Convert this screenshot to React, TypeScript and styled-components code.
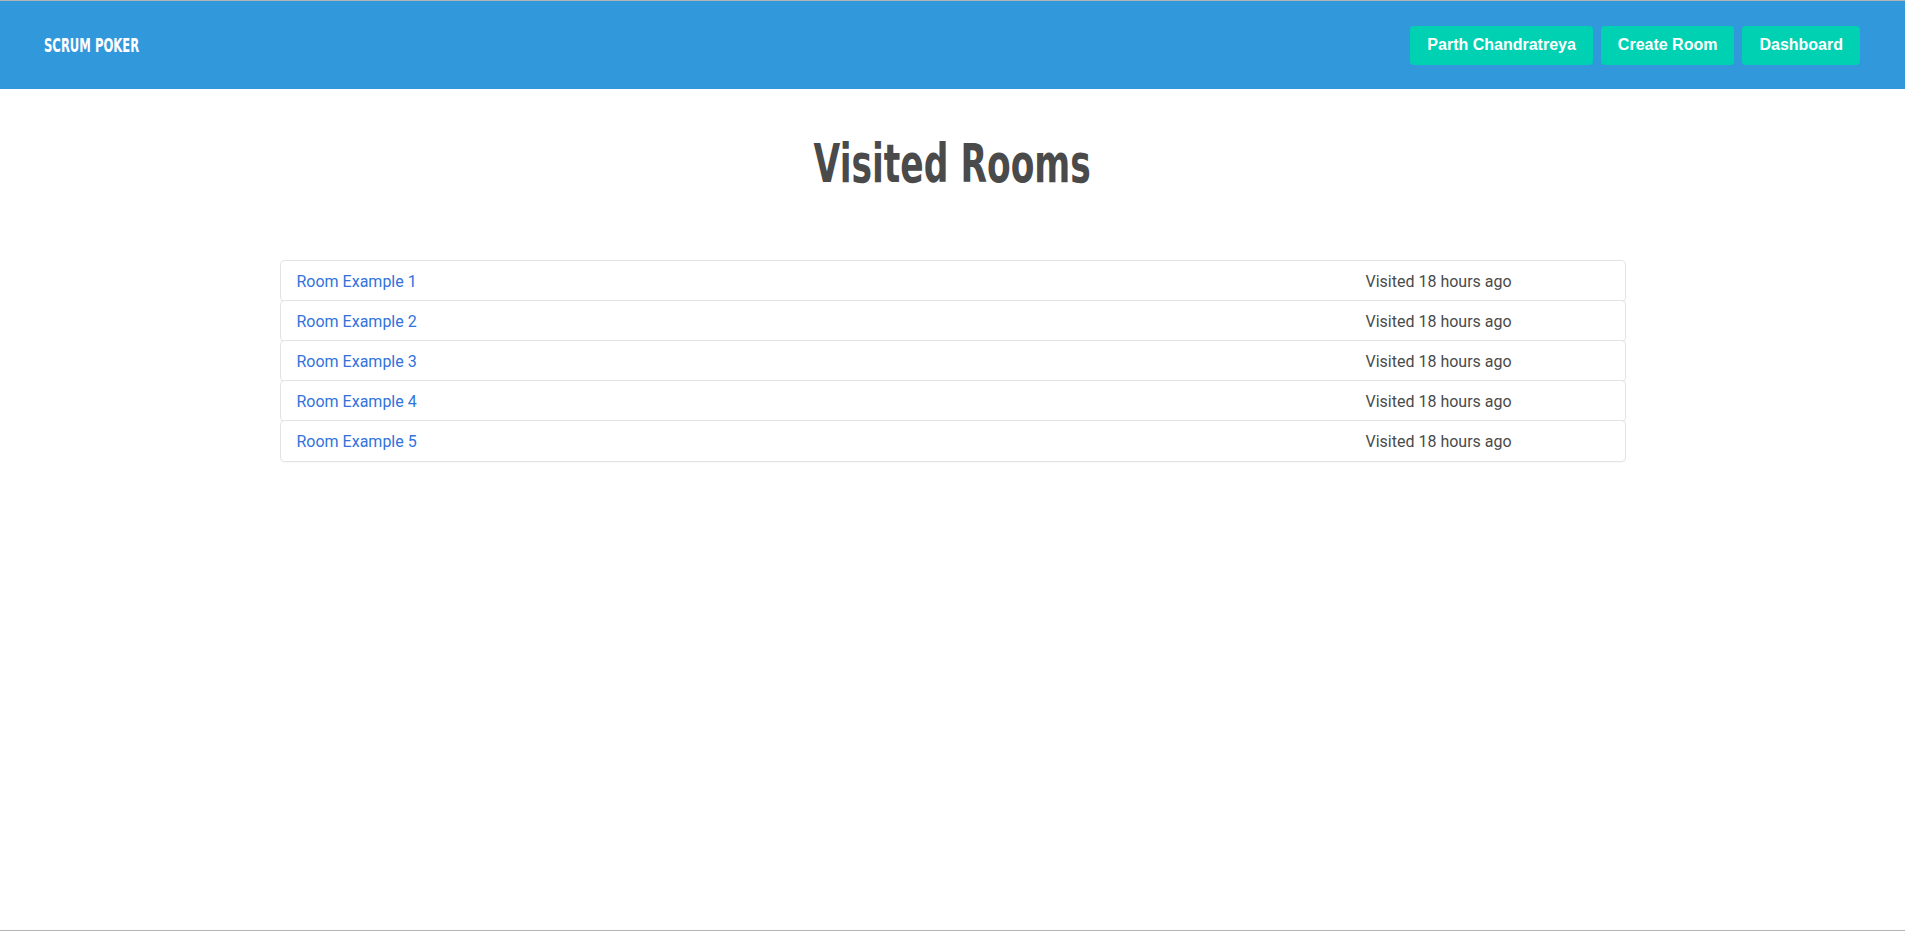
import React from "react";
import styled, { createGlobalStyle } from "styled-components";

const GlobalStyle = createGlobalStyle`
  html, body {
    margin: 0;
    padding: 0;
    background: #ffffff;
  }
  * { box-sizing: border-box; }
`;

const Page = styled.div`
  min-height: 100vh;
  border-top: 1px solid #b4b4b4;
  border-bottom: 1px solid #b4b4b4;
  font-family: Roboto, "Liberation Sans", sans-serif;
  display: flex;
  flex-direction: column;
`;

const Navbar = styled.nav`
  height: 88px;
  background: #3298dc;
  display: flex;
  align-items: center;
  justify-content: space-between;
  padding: 0 45px 0 44px;
`;

const Brand = styled.a`
  display: inline-block;
  font-family: "DejaVu Sans Condensed", sans-serif;
  font-weight: 700;
  font-size: 19px;
  color: #ffffff;
  text-decoration: none;
  transform: scaleX(0.68);
  transform-origin: left center;
`;

const NavButtons = styled.div`
  display: flex;
  gap: 8px;
`;

const NavButton = styled.a`
  height: 39px;
  display: inline-flex;
  align-items: center;
  padding: 0 17px;
  background: #00d1b2;
  color: #ffffff;
  border-radius: 4px;
  font-family: "Liberation Sans", Arial, sans-serif;
  font-weight: 700;
  font-size: 16px;
  text-decoration: none;
`;

const Title = styled.h1`
  margin: 35px 0 0;
  text-align: center;
  line-height: 80px;
`;

const TitleText = styled.span`
  display: inline-block;
  font-family: "DejaVu Sans Condensed", sans-serif;
  font-weight: 700;
  font-size: 54px;
  color: #4a4a4a;
  transform: scaleX(0.71);
  transform-origin: center center;
`;

const List = styled.div`
  width: 1344px;
  margin: 50px auto 0;
  display: flex;
  flex-direction: column;
`;

const Row = styled.div`
  height: 40px;
  display: grid;
  grid-template-columns: 1fr 259px;
  align-items: center;
  padding-left: 16px;
  background: #ffffff;
  border-radius: 4px;
  box-shadow: 0 0 0 1px #e3e3e3, 0 1px 2px rgba(10, 10, 10, 0.1);
  font-size: 16px;
`;

const RoomLink = styled.a`
  color: #3273dc;
  text-decoration: none;
`;

const Visited = styled.span`
  color: #4a4a4a;
`;

const rooms = [1, 2, 3, 4, 5].map((n) => ({ name: `Room Example ${n}`, visited: "Visited 18 hours ago" }));

export default function App() {
  return (
    <>
      <GlobalStyle />
      <Page>
        <Navbar>
          <Brand href="#">SCRUM POKER</Brand>
          <NavButtons>
            <NavButton href="#">Parth Chandratreya</NavButton>
            <NavButton href="#">Create Room</NavButton>
            <NavButton href="#">Dashboard</NavButton>
          </NavButtons>
        </Navbar>
        <Title>
          <TitleText>Visited Rooms</TitleText>
        </Title>
        <List>
          {rooms.map((r) => (
            <Row key={r.name}>
              <RoomLink href="#">{r.name}</RoomLink>
              <Visited>{r.visited}</Visited>
            </Row>
          ))}
        </List>
      </Page>
    </>
  );
}
